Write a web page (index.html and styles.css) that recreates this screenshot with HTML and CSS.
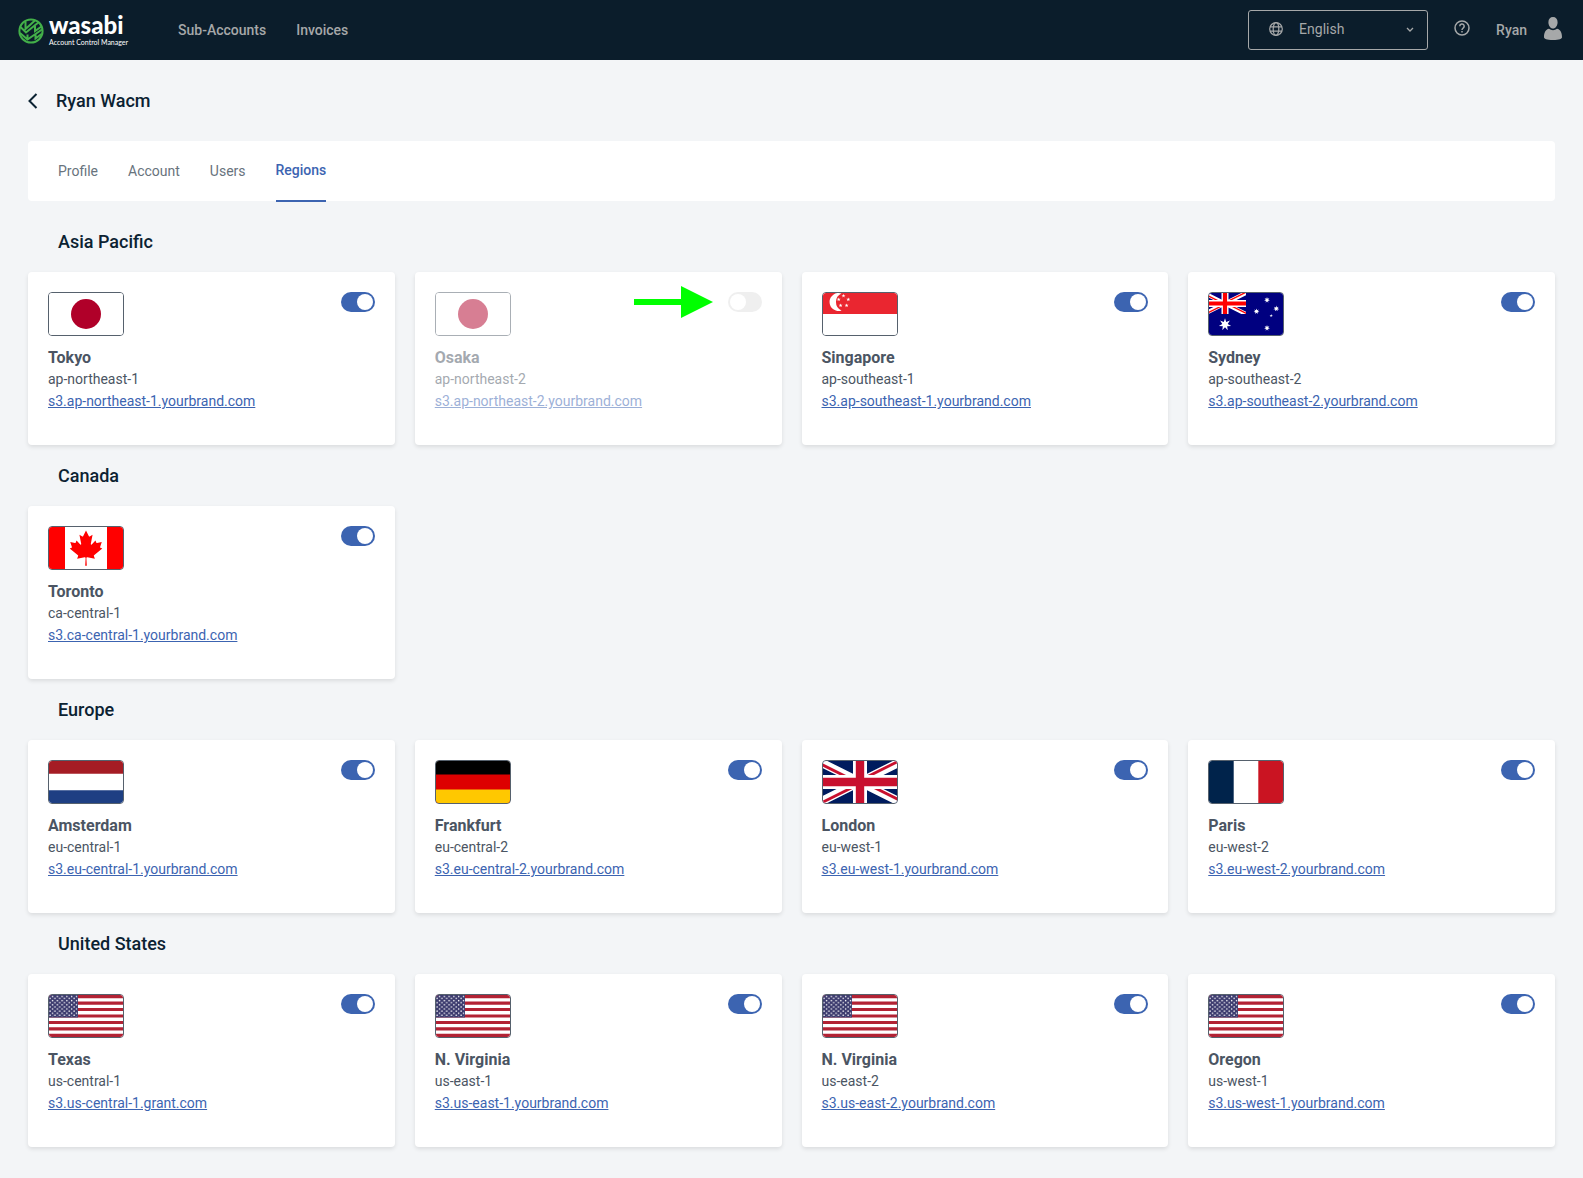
FILE: index.html
```html
<!DOCTYPE html>
<html lang="en">
<head>
<meta charset="utf-8">
<meta name="viewport" content="width=device-width, initial-scale=1">
<title>Wasabi Account Control Manager</title>
<link rel="stylesheet" href="styles.css">
</head>
<body>
<svg class="defs" aria-hidden="true">
  <defs>
    <path id="star5" d="M0-1 .225-.309 .951-.309 .363.118 .588.809 0 .382-.588.809-.363.118-.951-.309-.225-.309z"/>
    <path id="star7" d="M0-1 .193-.4 .782-.623 .433-.099 .975.223 .347.277 .434.901 0 .444-.434.901-.347.277-.975.223-.433-.099-.782-.623-.193-.4z"/>
    <pattern id="stars" width="4.8" height="4.2" patternUnits="userSpaceOnUse">
      <circle cx="1.6" cy="1.4" r=".75" fill="#fff"/>
      <circle cx="4" cy="3.5" r=".75" fill="#fff"/>
    </pattern>
    <clipPath id="uk-tri"><path d="M30 15h30v15zv15H0zH0V0zV0h30z"/></clipPath>
  </defs>
  <symbol id="flag-jp" viewBox="0 0 74 42" preserveAspectRatio="xMidYMid slice">
    <path fill="#fff" d="M0 0h74v42H0z"/><circle cx="37" cy="21" r="15" fill="#b00029"/>
  </symbol>
  <symbol id="flag-us" viewBox="0 0 79.8 42" preserveAspectRatio="xMidYMid slice">
    <path fill="#fff" d="M0 0h80v42H0z"/>
    <path stroke="#b22234" stroke-width="3.23" d="M0 1.6h80M0 8.1h80M0 14.5h80M0 21h80M0 27.5h80M0 33.9h80M0 40.4h80"/>
    <path fill="#3c3b6e" d="M0 0h31.9v22.6H0z"/><path fill="url(#stars)" d="M2.5 0h29v22H2.5z"/>
  </symbol>
</svg>

<header class="topbar">
  <a class="brand" href="#" aria-label="Wasabi Account Control Manager">
    <svg class="brand-mark" viewBox="0 0 26 26" fill="none" stroke="#43b049" stroke-width="2">
      <circle cx="13" cy="13" r="11.6"/>
      <path d="M7.500 3.500v7.500l10-9M2 8.500l6 6 13-10.500M17 8v5l6.500-4.500M2 15l7.500 6.500 14.500-10M17.500 15.500v5l6-4.500M9.500 16.500v5"/>
    </svg>
    <span class="brand-text">
      <span class="brand-name">wasabi</span>
      <span class="brand-sub">Account Control Manager</span>
    </span>
  </a>
  <nav class="main-nav">
    <a href="#">Sub-Accounts</a>
    <a href="#">Invoices</a>
  </nav>
  <div class="tools">
    <div class="language">
      <svg class="globe" viewBox="0 0 14 14" fill="none" stroke="currentColor" stroke-width="1.200"><circle cx="7" cy="7" r="6.300"/><ellipse cx="7" cy="7" rx="2.800" ry="6.300"/><path d="M1 4.800h12M1 9.200h12"/></svg>
      <select aria-label="Language"><option>English</option></select>
      <svg class="caret" viewBox="0 0 8 6" fill="none" stroke="currentColor" stroke-width="1.300"><path d="M1 1l3 3 3-3"/></svg>
    </div>
    <button class="help" type="button" aria-label="Help">
      <svg viewBox="0 0 16 16" fill="none" stroke="currentColor" stroke-width="1.500"><circle cx="8" cy="8" r="7"/><path d="M5.800 6.300a2.200 2.200 0 1 1 3.400 1.700C8.400 8.600 8 8.900 8 9.900M8 11v1.600"/></svg>
    </button>
    <button class="user" type="button">
      <span>Ryan</span>
      <svg viewBox="0 0 18 24" fill="currentColor"><path d="M9 0c2.800 0 4.600 2 4.600 5.200S11.600 11.500 9 11.500 4.400 8.400 4.400 5.200 6.200 0 9 0zM5 11.800c2.300 1.900 5.700 1.900 8 0 3.400.600 5 3.800 5 8.400 0 1.600-2.500 2.800-9 2.800s-9-1.200-9-2.800c0-4.600 1.600-7.800 5-8.400z"/></svg>
    </button>
  </div>
</header>

<main class="page">
  <div class="title-row">
    <a class="back" href="#" aria-label="Back"><svg viewBox="0 0 10 16" fill="none" stroke="currentColor" stroke-width="2"><path d="M8.500 1 1.500 8l7 7"/></svg></a>
    <h1>Ryan Wacm</h1>
  </div>

  <nav class="tabs">
    <a href="#">Profile</a>
    <a href="#">Account</a>
    <a href="#">Users</a>
    <a class="active" href="#" aria-current="page">Regions</a>
  </nav>

  <section>
    <h2>Asia Pacific</h2>
    <div class="cards">
      <article class="card">
        <div class="card-top"><svg class="flag"><use href="#flag-jp"/></svg><input class="toggle" type="checkbox" aria-label="Enable Tokyo" checked></div>
        <h3>Tokyo</h3><p>ap-northeast-1</p><a href="#">s3.ap-northeast-1.yourbrand.com</a>
      </article>
      <article class="card off">
        <div class="card-top"><svg class="flag"><use href="#flag-jp"/></svg><input class="toggle" type="checkbox" aria-label="Enable Osaka"></div>
        <h3>Osaka</h3><p>ap-northeast-2</p><a href="#">s3.ap-northeast-2.yourbrand.com</a>
        <svg class="pointer" viewBox="0 0 79 32" fill="#0f0" aria-hidden="true"><path d="M0 13h47V0l32 16-32 16V19H0z"/></svg>
      </article>
      <article class="card">
        <div class="card-top">
          <svg class="flag" viewBox="0 0 74 42">
            <path fill="#fff" d="M0 0h74v42H0z"/><path fill="#ea2630" d="M0 0h74v21H0z"/>
            <path fill="#fff" d="M18.500.500a9 9 0 1 0 0 17 9.300 9.300 0 0 1 0-17z"/>
            <g fill="#fff"><use href="#star5" transform="translate(20.500 2.800) scale(2.100)"/><use href="#star5" transform="translate(15.700 6.500) scale(2.100)"/><use href="#star5" transform="translate(25.300 6.500) scale(2.100)"/><use href="#star5" transform="translate(17.600 12.500) scale(2.100)"/><use href="#star5" transform="translate(23.600 12.500) scale(2.100)"/></g>
          </svg>
          <input class="toggle" type="checkbox" aria-label="Enable Singapore" checked>
        </div>
        <h3>Singapore</h3><p>ap-southeast-1</p><a href="#">s3.ap-southeast-1.yourbrand.com</a>
      </article>
      <article class="card">
        <div class="card-top">
          <svg class="flag" viewBox="0 0 84 42" preserveAspectRatio="xMidYMid slice">
            <path fill="#000080" d="M0 0h84v42H0z"/>
            <svg width="42" height="21" viewBox="0 0 60 30">
              <path stroke="#fff" stroke-width="6" d="M0 0l60 30M60 0 0 30"/>
              <path stroke="red" stroke-width="4" clip-path="url(#uk-tri)" d="M0 0l60 30M60 0 0 30"/>
              <path stroke="#fff" stroke-width="10" d="M30 0v30M0 15h60"/>
              <path stroke="red" stroke-width="6" d="M30 0v30M0 15h60"/>
            </svg>
            <g fill="#fff"><use href="#star7" transform="translate(21 31.500) scale(6.300)"/><use href="#star7" transform="translate(63 35) scale(3)"/><use href="#star7" transform="translate(63 7) scale(3)"/><use href="#star7" transform="translate(52.500 18.400) scale(3)"/><use href="#star7" transform="translate(72.300 15.600) scale(3)"/><use href="#star5" transform="translate(67.200 22.700) scale(1.750)"/></g>
          </svg>
          <input class="toggle" type="checkbox" aria-label="Enable Sydney" checked>
        </div>
        <h3>Sydney</h3><p>ap-southeast-2</p><a href="#">s3.ap-southeast-2.yourbrand.com</a>
      </article>
    </div>
  </section>

  <section>
    <h2>Canada</h2>
    <div class="cards">
      <article class="card">
        <div class="card-top">
          <svg class="flag" viewBox="0 0 9600 4800" preserveAspectRatio="xMidYMid slice">
            <path fill="red" d="M0 0h9600v4800H0z"/><path fill="#fff" d="M2400 0h4800v4800H2400z"/>
            <path fill="red" d="M4890 4430l-45-863a95 95 0 0 1 111-98l859 151-116-320a65 65 0 0 1 20-73l941-762-212-99a65 65 0 0 1-34-79l186-572-542 115a65 65 0 0 1-73-38l-105-247-423 454a65 65 0 0 1-111-57l204-1052-327 189a65 65 0 0 1-91-27l-332-652-332 652a65 65 0 0 1-91 27l-327-189 204 1052a65 65 0 0 1-111 57l-423-454-105 247a65 65 0 0 1-73 38l-542-115 186 572a65 65 0 0 1-34 79l-212 99 941 762a65 65 0 0 1 20 73l-116 320 859-151a95 95 0 0 1 111 98l-45 863z"/>
          </svg>
          <input class="toggle" type="checkbox" aria-label="Enable Toronto" checked>
        </div>
        <h3>Toronto</h3><p>ca-central-1</p><a href="#">s3.ca-central-1.yourbrand.com</a>
      </article>
    </div>
  </section>

  <section>
    <h2>Europe</h2>
    <div class="cards">
      <article class="card">
        <div class="card-top">
          <svg class="flag" viewBox="0 0 9 6" preserveAspectRatio="xMidYMid slice"><path fill="#fff" d="M0 0h9v6H0z"/><path fill="#a51c24" d="M0 0h9v2H0z"/><path fill="#1e3f83" d="M0 4h9v2H0z"/></svg>
          <input class="toggle" type="checkbox" aria-label="Enable Amsterdam" checked>
        </div>
        <h3>Amsterdam</h3><p>eu-central-1</p><a href="#">s3.eu-central-1.yourbrand.com</a>
      </article>
      <article class="card">
        <div class="card-top">
          <svg class="flag" viewBox="0 0 5 3" preserveAspectRatio="xMidYMid slice"><path d="M0 0h5v3H0z"/><path fill="#d00" d="M0 1h5v2H0z"/><path fill="#ffc800" d="M0 2h5v1H0z"/></svg>
          <input class="toggle" type="checkbox" aria-label="Enable Frankfurt" checked>
        </div>
        <h3>Frankfurt</h3><p>eu-central-2</p><a href="#">s3.eu-central-2.yourbrand.com</a>
      </article>
      <article class="card">
        <div class="card-top">
          <svg class="flag" viewBox="0 0 60 30" preserveAspectRatio="xMidYMid slice">
            <path fill="#001b5e" d="M0 0h60v30H0z"/>
            <path stroke="#fff" stroke-width="6" d="M0 0l60 30M60 0 0 30"/>
            <path stroke="#c8102e" stroke-width="4" clip-path="url(#uk-tri)" d="M0 0l60 30M60 0 0 30"/>
            <path stroke="#fff" stroke-width="10" d="M30 0v30M0 15h60"/>
            <path stroke="#c8102e" stroke-width="6" d="M30 0v30M0 15h60"/>
          </svg>
          <input class="toggle" type="checkbox" aria-label="Enable London" checked>
        </div>
        <h3>London</h3><p>eu-west-1</p><a href="#">s3.eu-west-1.yourbrand.com</a>
      </article>
      <article class="card">
        <div class="card-top">
          <svg class="flag" viewBox="0 0 74 42"><path fill="#fff" d="M0 0h74v42H0z"/><path fill="#00234b" d="M0 0h24.700v42H0z"/><path fill="#ca1422" d="M49.300 0H74v42H49.300z"/></svg>
          <input class="toggle" type="checkbox" aria-label="Enable Paris" checked>
        </div>
        <h3>Paris</h3><p>eu-west-2</p><a href="#">s3.eu-west-2.yourbrand.com</a>
      </article>
    </div>
  </section>

  <section>
    <h2>United States</h2>
    <div class="cards">
      <article class="card">
        <div class="card-top"><svg class="flag"><use href="#flag-us"/></svg><input class="toggle" type="checkbox" aria-label="Enable Texas" checked></div>
        <h3>Texas</h3><p>us-central-1</p><a href="#">s3.us-central-1.grant.com</a>
      </article>
      <article class="card">
        <div class="card-top"><svg class="flag"><use href="#flag-us"/></svg><input class="toggle" type="checkbox" aria-label="Enable N. Virginia us-east-1" checked></div>
        <h3>N. Virginia</h3><p>us-east-1</p><a href="#">s3.us-east-1.yourbrand.com</a>
      </article>
      <article class="card">
        <div class="card-top"><svg class="flag"><use href="#flag-us"/></svg><input class="toggle" type="checkbox" aria-label="Enable N. Virginia us-east-2" checked></div>
        <h3>N. Virginia</h3><p>us-east-2</p><a href="#">s3.us-east-2.yourbrand.com</a>
      </article>
      <article class="card">
        <div class="card-top"><svg class="flag"><use href="#flag-us"/></svg><input class="toggle" type="checkbox" aria-label="Enable Oregon" checked></div>
        <h3>Oregon</h3><p>us-west-1</p><a href="#">s3.us-west-1.yourbrand.com</a>
      </article>
    </div>
  </section>
</main>
</body>
</html>
```
FILE: styles.css
```css
* { box-sizing: border-box; }

body {
  margin: 0;
  background: #f3f5f7;
  color: #4b5563;
  font: 14px/22px Roboto, "Liberation Sans", sans-serif;
}

h1, h2, h3, p { margin: 0; }
a { color: inherit; text-decoration: none; }
svg { display: block; flex: none; }
button { padding: 0; border: 0; background: none; color: inherit; font: inherit; cursor: pointer; }

.defs { position: absolute; width: 0; height: 0; }

/* Top bar */
.topbar {
  display: flex;
  align-items: center;
  height: 60px;
  padding: 0 21px 0 18px;
  background: #0b1d2b;
  color: #a6a8a9;
  font-weight: 500;
}
.brand { display: flex; align-items: center; gap: 5px; color: #fff; }
.brand-mark { width: 26px; height: 26px; margin-top: 2px; }
.brand-text { display: flex; flex-direction: column; width: 80px; padding-bottom: 2px; }
.brand-name { font: 900 24px/26px Lato, sans-serif; }
.brand-sub { font: 400 7px/8px Lato, sans-serif; white-space: nowrap; }

.main-nav { display: flex; gap: 30px; margin-left: 49px; }

.tools { display: flex; align-items: center; margin-left: auto; }
.language { display: grid; grid-template-columns: 50px 1fr 24px; align-items: center; width: 180px; height: 40px; }
.language > * { grid-row: 1; }
.language select {
  grid-column: 1 / -1;
  width: 100%;
  height: 40px;
  padding: 0 30px 2px 50px;
  appearance: none;
  border: 1px solid #a6a8a9;
  border-radius: 3px;
  background: none;
  color: inherit;
  font: 400 14px/22px Roboto, sans-serif;
}
.globe { grid-column: 1; width: 14px; height: 14px; margin: 0 0 2px 21px; }
.caret { grid-column: 3; width: 8px; height: 6px; margin-left: 2px; }
.help { margin: 0 26px; }
.help svg { width: 16px; height: 16px; margin-bottom: 4px; }
.user { display: flex; align-items: center; gap: 17px; }
.user svg { width: 18px; height: 24px; margin-bottom: 2px; }

/* Page */
.page { padding: 28px 28px 31px; }
.title-row { display: flex; align-items: center; gap: 18px; height: 26px; margin-bottom: 27px; color: #0b2232; }
.back svg { width: 10px; height: 16px; }
h1, h2 { color: #0b2232; font-size: 18px; line-height: 26px; font-weight: 500; }

.tabs {
  display: flex;
  gap: 30px;
  height: 60px;
  margin-bottom: 10px;
  padding: 0 30px;
  border-radius: 4px;
  background: #fff;
  color: #68737d;
  line-height: 60px;
}
.tabs .active {
  height: 61px;
  border-bottom: 2px solid #3c64b1;
  color: #3c64b1;
  font-weight: 500;
  line-height: 59px;
}

h2 { padding: 18px 30px 17px; }

.cards { display: grid; grid-template-columns: repeat(4, 1fr); gap: 20px; }
.card {
  position: relative;
  padding: 20px 20px 33px;
  border-radius: 4px;
  background: #fff;
  box-shadow: 0 2px 4px rgba(0, 0, 0, .1);
}
.card-top { display: flex; justify-content: space-between; align-items: flex-start; margin-bottom: 12px; }
.flag { width: 76px; height: 44px; border: 1px solid #56616d; border-radius: 4px; overflow: hidden; }
.card h3 { font-size: 16px; line-height: 20px; font-weight: 700; }
.card > a { display: block; width: fit-content; color: #3c64b1; text-decoration: underline; }

.toggle {
  width: 34px;
  height: 20px;
  margin: 0;
  padding: 2px;
  appearance: none;
  border-radius: 10px;
  background: #efefef;
  cursor: pointer;
}
.toggle::before {
  content: "";
  display: block;
  width: 16px;
  height: 16px;
  border-radius: 50%;
  background: #fff;
}
.toggle:checked { background: #3c64b1; }
.toggle:checked::before { margin-left: 14px; }

.off .flag, .off h3, .off p, .off > a { opacity: .5; }

/* Callout arrow laid over the card */
.pointer { position: absolute; top: 14px; right: 69px; width: 79px; height: 32px; }

@media (max-width: 1000px) {
  .cards { grid-template-columns: repeat(2, 1fr); }
}
```
